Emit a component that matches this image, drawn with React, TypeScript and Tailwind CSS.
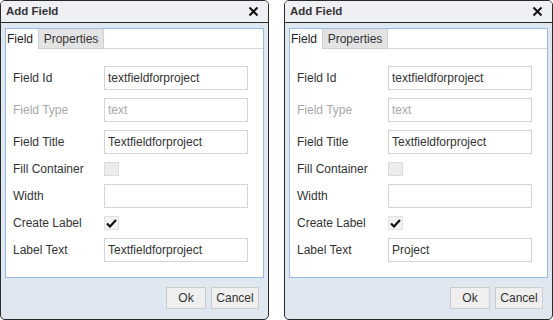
import React from "react";

type Row =
  | { kind: "input"; label: string; value: string; disabled?: boolean }
  | { kind: "check"; label: string; checked: boolean; disabled?: boolean };

const CheckBox = ({ checked, disabled }: { checked: boolean; disabled?: boolean }) => (
  <div
    className={
      "w-[15px] h-[14px] flex items-center justify-center border " +
      (disabled ? "bg-[#ececec] border-[#dcdcdc]" : "bg-[#f3f3f3] border-[#e2e2e2]")
    }
  >
    {checked && (
      <svg width="11" height="9" viewBox="0 0 11 9">
        <path d="M1 4.5 L4 7.5 L10 1" stroke="#111" strokeWidth="2.2" fill="none" />
      </svg>
    )}
  </div>
);

const Dialog = ({ labelText }: { labelText: string }) => {
  const rows: Row[] = [
    { kind: "input", label: "Field Id", value: "textfieldforproject" },
    { kind: "input", label: "Field Type", value: "text", disabled: true },
    { kind: "input", label: "Field Title", value: "Textfieldforproject" },
    { kind: "check", label: "Fill Container", checked: false, disabled: true },
    { kind: "input", label: "Width", value: "" },
    { kind: "check", label: "Create Label", checked: true },
    { kind: "input", label: "Label Text", value: labelText },
  ];

  return (
    <div className="w-[269px] h-[320px] flex flex-col border border-[#2a2a2a] rounded-[5px] overflow-hidden bg-[#dfe7f1]">
      {/* header */}
      <div className="h-[22px] shrink-0 flex items-center justify-between pl-[5px] pr-[9px] bg-[#eef0f3] border-b border-[#2a2a2a]">
        <span className="text-[11.5px] font-bold text-[#333]">Add Field</span>
        <svg width="11" height="11" viewBox="0 0 11 11">
          <path d="M1.5 1.5 L9.5 9.5 M9.5 1.5 L1.5 9.5" stroke="#111" strokeWidth="2" />
        </svg>
      </div>

      {/* tab panel */}
      <div className="mx-[4px] mt-[5px] h-[250px] flex flex-col bg-white border border-[#99bbe8]">
        <div className="h-[20px] flex items-stretch text-[12px]">
          <div className="pl-[1px] w-[33px] flex items-center text-[#222] bg-white border-r border-[#cfcfcf]">
            Field
          </div>
          <div className="w-[65px] flex items-center justify-center text-[#333] bg-[#e3e3e3] border-b border-r border-[#cfcfcf]">
            Properties
          </div>
          <div className="flex-1 border-b border-[#d6d6d6]" />
        </div>

        <div className="flex flex-col gap-2 pt-[17px] pl-[7px]">
          {rows.map((r, i) => (
            <div
              key={i}
              className={"flex items-center " + (r.kind === "input" ? "h-[24px]" : "h-[14px]")}
            >
              <div
                className={
                  "w-[91px] text-[12px] " +
                  (r.disabled && r.kind === "input" ? "text-[#a9a9a9]" : "text-[#333]")
                }
              >
                {r.label}
              </div>
              {r.kind === "input" ? (
                <div
                  className={
                    "w-[144px] h-[24px] flex items-center px-[3px] border border-[#d4d4d4] bg-white text-[12px] " +
                    (r.disabled ? "text-[#a9a9a9]" : "text-[#333]")
                  }
                >
                  {r.value}
                </div>
              ) : (
                <CheckBox checked={r.checked} disabled={r.disabled} />
              )}
            </div>
          ))}
        </div>
      </div>

      {/* buttons */}
      <div className="flex-1 flex items-center justify-end gap-[5px] pr-[9px] pb-[1px]">
        <button className="w-[40px] h-[22px] text-[12px] text-[#333] bg-[#efefef] border border-[#cccccc]">
          Ok
        </button>
        <button className="w-[48px] h-[22px] text-[12px] text-[#333] bg-[#efefef] border border-[#cccccc]">
          Cancel
        </button>
      </div>
    </div>
  );
};

export default function App() {
  return (
    <div
      className="w-[553px] h-[320px] flex justify-between bg-white"
      style={{ fontFamily: '"Liberation Sans", Arial, sans-serif' }}
    >
      <Dialog labelText="Textfieldforproject" />
      <Dialog labelText="Project" />
    </div>
  );
}
